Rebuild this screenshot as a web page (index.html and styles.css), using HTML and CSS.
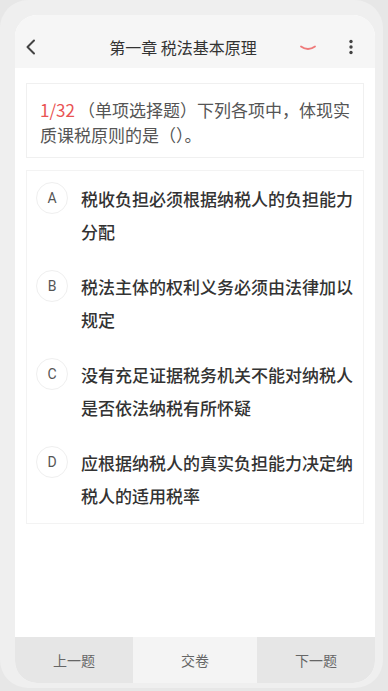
FILE: index.html
```html
<!DOCTYPE html>
<html lang="zh-CN">
<head>
<meta charset="utf-8">
<title>第一章 税法基本原理</title>
<link rel="stylesheet" href="styles.css">
</head>
<body>
<div class="phone">
  <div class="screen">
    <header class="topbar">
      <span class="back">
        <svg width="12" height="16" viewBox="0 0 12 16"><path d="M9 1.5 L2.5 8 L9 14.5" fill="none" stroke="#444" stroke-width="2" stroke-linecap="round" stroke-linejoin="round"/></svg>
      </span>
      <h1 class="title">第一章 税法基本原理</h1>
      <span class="fold">
        <svg width="18" height="8" viewBox="0 0 18 8"><path d="M2 2.5 Q9 7.5 16 2.5" fill="none" stroke="#ef7a7a" stroke-width="1.8" stroke-linecap="round"/></svg>
      </span>
      <span class="more">
        <svg width="6" height="16" viewBox="0 0 6 16"><circle cx="3" cy="2.5" r="1.7" fill="#444"/><circle cx="3" cy="8" r="1.7" fill="#444"/><circle cx="3" cy="13.5" r="1.7" fill="#444"/></svg>
      </span>
    </header>
    <main class="content">
      <section class="question">
        <p><span class="num">1/32</span>（单项选择题）下列各项中，体现实质课税原则的是（）。</p>
      </section>
      <section class="options">
        <div class="option"><span class="letter">A</span><p class="otext">税收负担必须根据纳税人的负担能力分配</p></div>
        <div class="option"><span class="letter">B</span><p class="otext">税法主体的权利义务必须由法律加以规定</p></div>
        <div class="option"><span class="letter">C</span><p class="otext">没有充足证据税务机关不能对纳税人是否依法纳税有所怀疑</p></div>
        <div class="option"><span class="letter">D</span><p class="otext">应根据纳税人的真实负担能力决定纳税人的适用税率</p></div>
      </section>
    </main>
    <footer class="bottombar">
      <div class="btn side">上一题</div>
      <div class="btn mid">交卷</div>
      <div class="btn side">下一题</div>
    </footer>
  </div>
</div>
</body>
</html>
```
FILE: styles.css
```css
* { box-sizing: border-box; }
html, body { margin: 0; padding: 0; }
body {
  background: #e7e7e7;
  width: 388px;
  height: 691px;
  overflow: hidden;
  font-family: "Noto Sans CJK SC", "Noto Sans", sans-serif;
}
.phone {
  width: 383px;
  height: 688px;
  background: #efefef;
  border-radius: 28px;
  padding: 15px 8px 5px 15px;
}
.screen {
  width: 360px;
  height: 668px;
  border-radius: 22px;
  overflow: hidden;
  display: flex;
  flex-direction: column;
  background: #fff;
}
.topbar {
  height: 53px;
  background: #f6f6f6;
  display: flex;
  align-items: center;
  padding: 10px 0 0 0;
}
.back {
  width: 12px;
  height: 16px;
  margin-left: 10px;
  display: flex;
}
.title {
  margin: 0;
  flex: 1;
  text-align: center;
  font-size: 16px;
  font-weight: 400;
  color: #333;
  line-height: 20px;
  padding-left: 30px;
}
.fold {
  width: 18px;
  height: 8px;
  display: flex;
  margin-right: 31px;
  margin-top: 2px;
}
.more {
  width: 6px;
  height: 16px;
  display: flex;
  margin-right: 21px;
}
.content {
  flex: 1;
  padding: 15px 11px 0 11px;
  background: #fff;
}
.question {
  border: 1px solid #f0f0f0;
  padding: 13px 10px 10px 13px;
}
.question p {
  margin: 0;
  font-size: 17px;
  line-height: 25px;
  color: #555;
}
.num { color: #e95353; margin-right: 3px; }
.options {
  margin-top: 12px;
  border: 1px solid #f3f3f3;
  padding: 0;
}
.option {
  display: flex;
  align-items: flex-start;
  padding: 11px 0;
  height: 88px;
}
.letter {
  width: 32px;
  height: 32px;
  border: 1px solid #efefef;
  border-radius: 50%;
  margin-left: 9px;
  display: flex;
  align-items: center;
  justify-content: center;
  font-family: "Roboto", "Noto Sans", sans-serif;
  font-size: 14px;
  color: #555;
  flex-shrink: 0;
}
.otext {
  margin: 0 0 0 13px;
  width: 281px;
  font-size: 17px;
  line-height: 33px;
  color: #333;
  font-weight: 500;
}
.bottombar {
  height: 46px;
  display: flex;
}
.btn {
  display: flex;
  align-items: center;
  justify-content: center;
  font-size: 14px;
  color: #666;
}
.side { width: 118px; background: #e6e6e6; }
.mid { width: 124px; background: #f4f4f4; }
```
